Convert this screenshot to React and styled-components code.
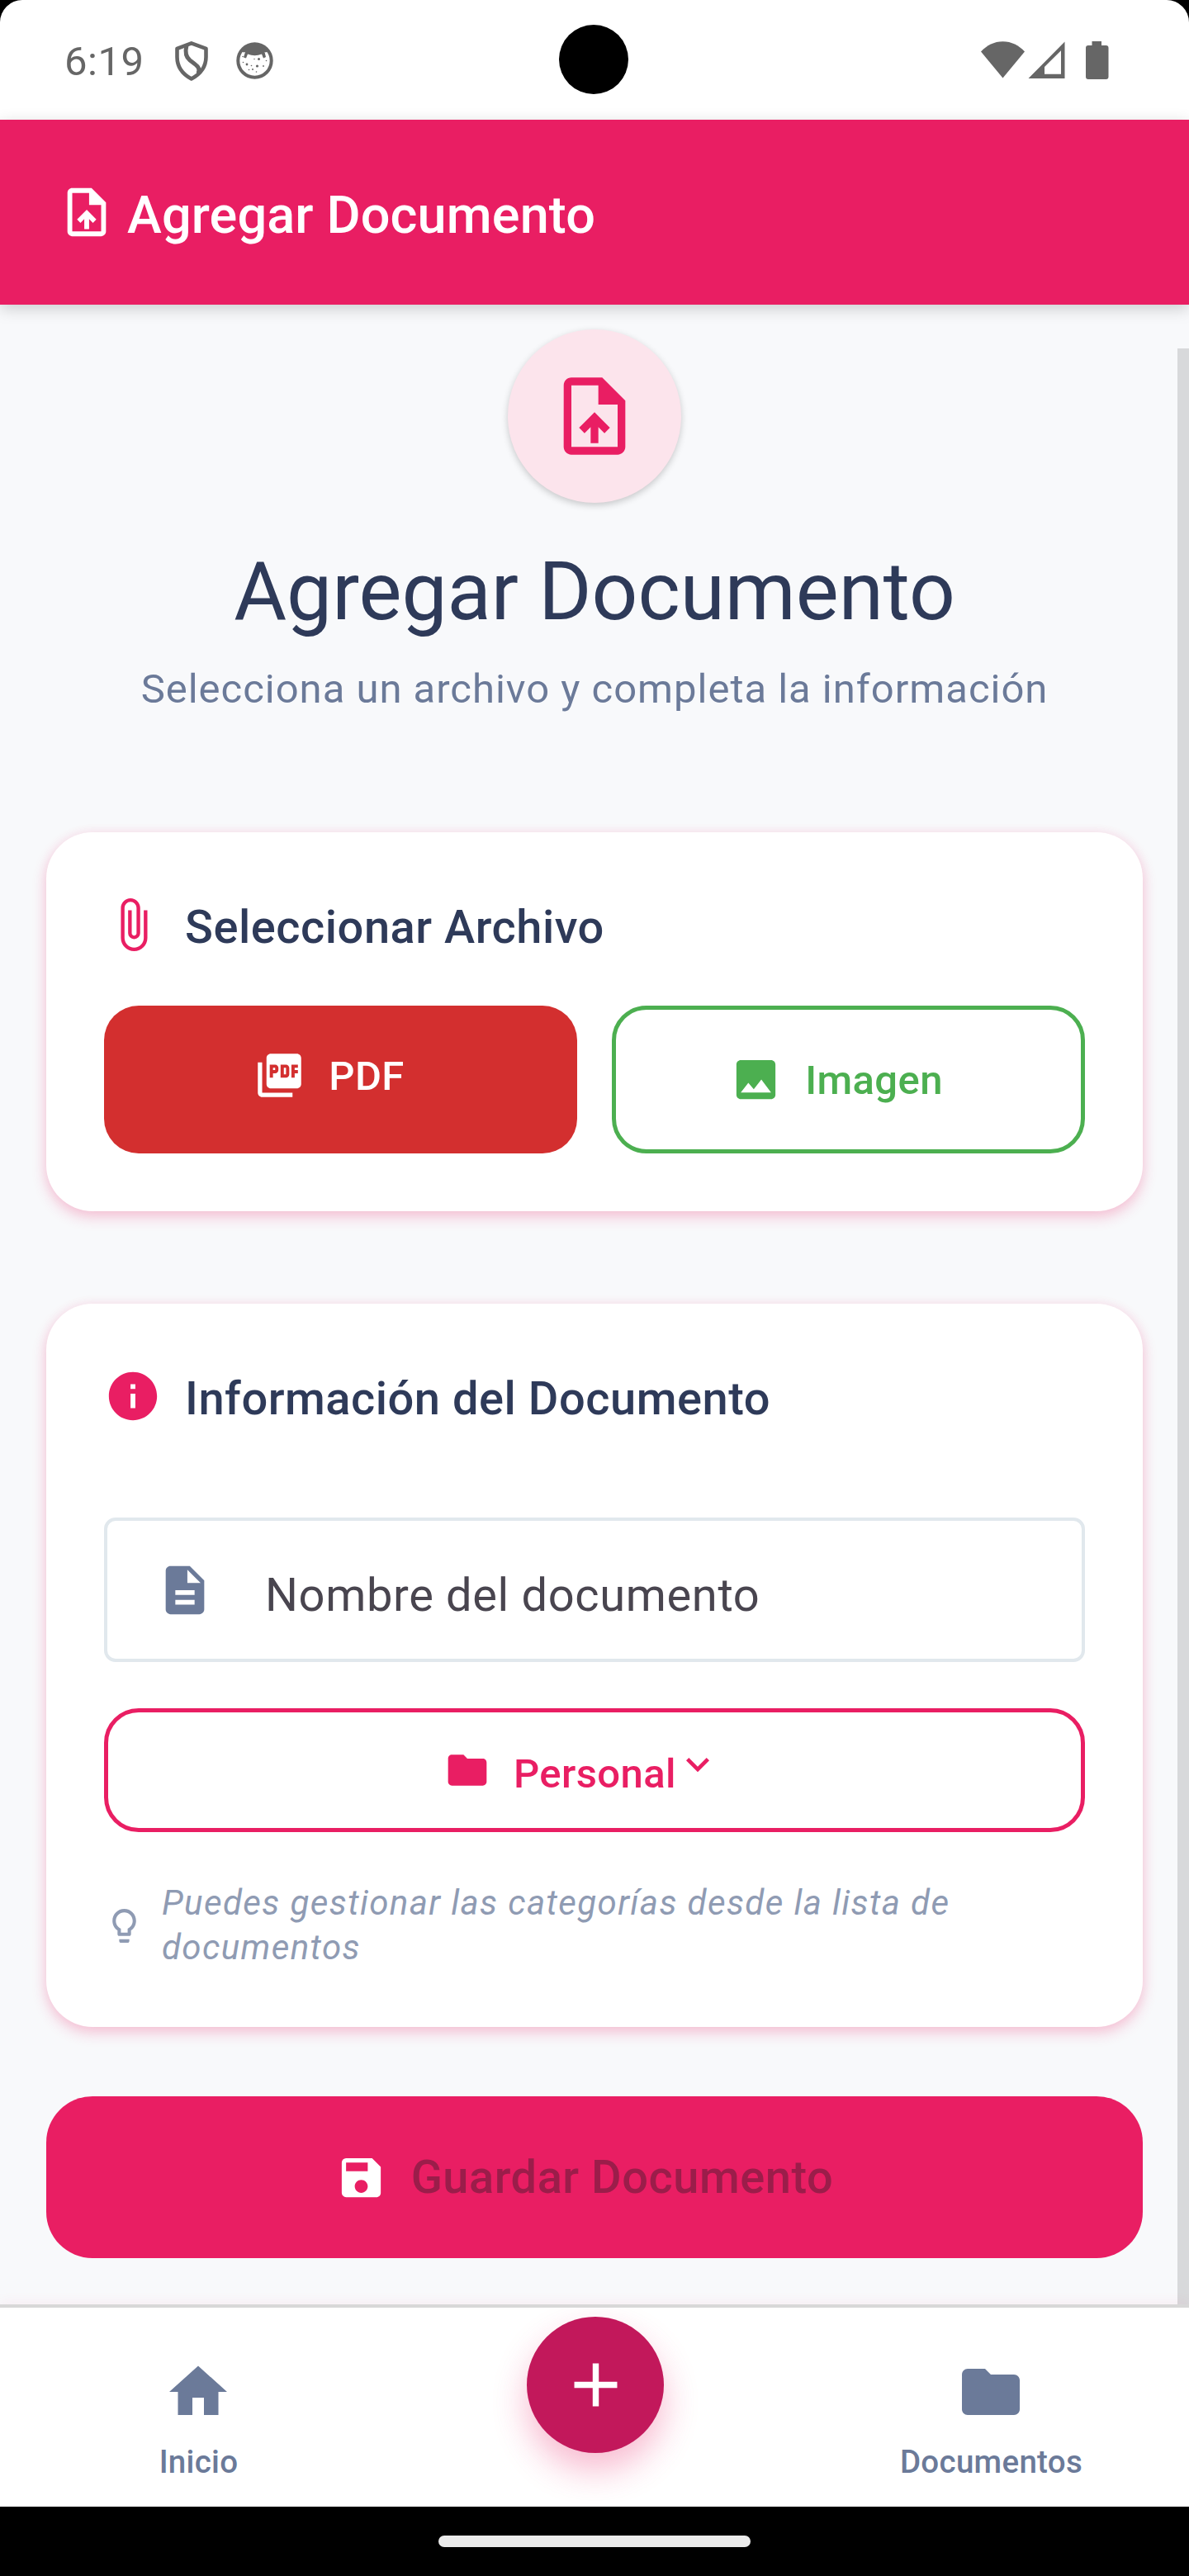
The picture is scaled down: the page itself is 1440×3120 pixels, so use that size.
import React from "react";
import styled, { createGlobalStyle, css } from "styled-components";
import {
  MdUploadFile,
  MdAttachFile,
  MdPictureAsPdf,
  MdImage,
  MdInfo,
  MdDescription,
  MdFolder,
  MdKeyboardArrowDown,
  MdLightbulbOutline,
  MdSave,
  MdHome,
  MdAdd,
} from "react-icons/md";

const pink = "#E91E63";
const navy = "#2E3A59";
const slate = "#6B7A99";

const GlobalStyle = createGlobalStyle`
  * { box-sizing: border-box; }
  html, body { margin: 0; background: #000; }
  body { font-family: Roboto, "Noto Sans", sans-serif; }
  button { font: inherit; border: 0; background: none; padding: 0; margin: 0; }
  svg { display: block; flex: none; }
`;

const Screen = styled.div`
  width: 1440px;
  height: 3120px;
  display: flex;
  flex-direction: column;
  overflow: hidden;
  background: #f8f9fb;
`;

const StatusArea = styled.div`
  height: 145px;
  flex: none;
  background: #000;
`;

const StatusBar = styled.div`
  position: relative;
  height: 100%;
  display: flex;
  justify-content: space-between;
  align-items: flex-start;
  padding: 50px 97px 0 78px;
  background: #fff;
  border-radius: 27px 27px 0 0;
  color: #666;
`;

const Camera = styled.div`
  position: absolute;
  left: 677px;
  top: 30px;
  width: 84px;
  height: 84px;
  border-radius: 50%;
  background: #000;
`;

const StatusGroup = styled.div`
  display: flex;
  align-items: flex-start;
`;

const Clock = styled.span`
  width: 133px;
  font-size: 49px;
  line-height: 50px;
  letter-spacing: 0.5px;
`;

const StatusIcons = styled.div`
  display: flex;
  gap: 33px;
`;

const Header = styled.header`
  position: relative;
  z-index: 2;
  flex: none;
  height: 224px;
  display: flex;
  align-items: center;
  gap: 14px;
  padding: 0 70px;
  background: ${pink};
  color: #fff;
  box-shadow: 0 5px 18px rgba(0, 0, 0, 0.18);
`;

const HeaderTitle = styled.div`
  font-size: 63px;
  line-height: 74px;
  font-weight: 500;
  letter-spacing: 0.12px;
  margin-top: 7px;
`;

const Content = styled.main`
  position: relative;
  flex: 1;
  display: flex;
  flex-direction: column;
  padding: 30px 56px 0;
`;

const ScrollThumb = styled.div`
  position: absolute;
  right: 0;
  top: 53px;
  bottom: 0;
  width: 14px;
  background: #d8d9db;
`;

const Intro = styled.section`
  display: flex;
  flex-direction: column;
  align-items: center;
  height: 609px;
`;

const IntroBadge = styled.div`
  width: 210px;
  height: 210px;
  border-radius: 50%;
  display: flex;
  align-items: center;
  justify-content: center;
  background: #fce4ec;
  color: ${pink};
  box-shadow: 0 3px 8px rgba(0, 0, 0, 0.2);
`;

const Title = styled.h1`
  margin: 45px 0 0;
  font-size: 98px;
  line-height: 126px;
  font-weight: 400;
  color: ${navy};
`;

const Subtitle = styled.p`
  margin: 20px 0 0;
  font-size: 49px;
  line-height: 70px;
  letter-spacing: 0.98px;
  white-space: nowrap;
  color: ${slate};
`;

const Card = styled.section`
  flex: none;
  height: ${(p) => p.$height}px;
  margin-bottom: ${(p) => p.$after}px;
  padding: 77px 70px 0;
  border-radius: 56px;
  background: #fff;
  box-shadow: 0 7px 17px rgba(233, 30, 99, 0.24), 0 0 14px rgba(233, 30, 99, 0.06);
`;

const CardHeading = styled.div`
  display: flex;
  align-items: center;
  gap: 28px;
  height: 70px;
  color: ${pink};
`;

const CardTitle = styled.h2`
  margin: 6px 0 0;
  font-size: 56px;
  line-height: 70px;
  font-weight: 500;
  letter-spacing: 0.525px;
  color: ${navy};
`;

const ButtonRow = styled.div`
  display: grid;
  grid-template-columns: 1fr 1fr;
  gap: 42px;
  margin-top: 63px;
`;

const FileButton = styled.button`
  height: 179px;
  display: flex;
  justify-content: center;
  align-items: center;
  gap: 28px;
  border-radius: 42px;
  ${(p) =>
    p.$filled
      ? css`
          background: #d32f2f;
          color: #fff;
          padding: 0 28px 10px 0;
        `
      : css`
          border: 5px solid #4caf50;
          color: #4caf50;
          padding-right: 29px;
        `}
`;

const ButtonLabel = styled.span`
  font-size: ${(p) => p.$size || 49}px;
  line-height: 70px;
  font-weight: 500;
  letter-spacing: ${(p) => p.$spacing || 0.4}px;
  margin-top: ${(p) => p.$drop || 0}px;
`;

const Field = styled.div`
  height: 175px;
  margin-top: 112px;
  display: flex;
  align-items: center;
  gap: 62px;
  padding-left: 59px;
  border: 4px solid #e1e8ed;
  border-radius: 14px;
  color: ${slate};
`;

const FieldLabel = styled.span`
  margin-top: 12px;
  font-size: 56px;
  line-height: 84px;
  letter-spacing: 0.65px;
  color: #49454f;
`;

const CategoryButton = styled.button`
  width: 100%;
  height: 150px;
  margin-top: 56px;
  display: flex;
  align-items: center;
  padding-left: 407px;
  border: 5px solid ${pink};
  border-radius: 42px;
  color: ${pink};
`;

const CategoryLabel = styled(ButtonLabel)`
  margin: 10px -2px 0 28px;
`;

const Chevron = styled(MdKeyboardArrowDown)`
  margin-bottom: 14px;
`;

const Hint = styled.div`
  display: flex;
  align-items: center;
  gap: 21px;
  margin-top: 59px;
  color: #8f9bb3;
`;

const HintText = styled.p`
  margin: 0;
  width: 1010px;
  font-size: 42px;
  line-height: 54px;
  font-style: italic;
  letter-spacing: 1.4px;
`;

const SaveButton = styled.button`
  flex: none;
  width: 100%;
  height: 196px;
  display: flex;
  justify-content: center;
  align-items: center;
  gap: 29px;
  padding-right: 25px;
  border-radius: 56px;
  background: ${pink};
  color: #fff;
`;

const SaveLabel = styled(ButtonLabel)`
  color: #9b1d4a;
`;

const NavBar = styled.nav`
  position: relative;
  z-index: 2;
  flex: none;
  height: 245px;
  display: grid;
  grid-template-columns: repeat(3, 1fr);
  border-top: 4px solid #d8d8d8;
  background: #fff;
  box-shadow: 0 -2px 16px rgba(233, 30, 99, 0.06);
`;

const NavItem = styled.div`
  display: flex;
  flex-direction: column;
  align-items: center;
  padding-top: 60px;
  color: ${slate};
`;

const NavLabel = styled.span`
  margin: 18px 0 0 1px;
  font-size: 38.5px;
  line-height: 50px;
  font-weight: 500;
  letter-spacing: 0.3px;
`;

const FabSlot = styled.div`
  display: flex;
  justify-content: center;
  padding: 11px 0 0 2px;
  overflow: hidden;
`;

const Fab = styled.button`
  width: 166px;
  height: 165px;
  border-radius: 50%;
  display: flex;
  align-items: center;
  justify-content: center;
  background: #c2185b;
  color: #fff;
  box-shadow: 0 21px 42px rgba(233, 30, 99, 0.3);
`;

const GestureBar = styled.div`
  position: relative;
  z-index: 3;
  flex: none;
  height: 84px;
  padding-top: 35px;
  background: #000;
`;

const Handle = styled.div`
  width: 378px;
  height: 14px;
  margin: 0 auto;
  border-radius: 7px;
  background: #ebebeb;
`;

const ShieldIcon = () => (
  <svg width="42" height="50" viewBox="0 0 42 50" fill="none" stroke="currentColor" strokeWidth="4.6" strokeLinejoin="round">
    <path d="M20.800 2.300L3.500 8.800V19C3.500 31 10.500 40 20.800 45.500C31 40 38.500 31 38.500 19V8.800Z" />
    <path d="M15 5C13 13 14 19 19 23C27 29 32.500 32 29 39" strokeWidth="5" />
  </svg>
);

const freckles = [
  [13, 28, 1.4],
  [27.5, 21.5, 1.5],
  [25.5, 30, 1.6],
  [20, 34, 1],
  [8.5, 25.5, 0.8],
  [18.5, 29.5, 0.8],
  [33, 30, 0.9],
  [36.5, 23.5, 0.8],
  [8, 18.5, 0.8],
  [22, 21.5, 0.7],
  [15.5, 34.5, 0.8],
  [24.5, 37, 0.8],
];

const FaceIcon = () => (
  <svg width="46" height="46" viewBox="0 0 46 46" fill="currentColor">
    <circle cx="22.500" cy="23.500" r="20.200" fill="none" stroke="currentColor" strokeWidth="4" />
    <path d="M6 11.500Q22.500-5 39 11.500L36 13.500L34.500 13L36 19L33 20.500L31 15.500Q22.500 19 14 15.500L12 20.500L9 19.500L11 13L9 13.500Z" />
    {freckles.map(([x, y, r]) => (
      <circle key={`${x}-${y}`} cx={x} cy={y} r={r} />
    ))}
  </svg>
);

const ConnectivityIcons = () => (
  <svg width="155" height="47" viewBox="0 0 155 47" fill="currentColor">
    <path d="M0 12.500C7 5 16 0.200 26.500 0.200S46 5 53 12.500L26.500 44.500Z" />
    <path fillRule="evenodd" d="M57.500 45L101.500 0.500V45ZM77 31V39.800H97V11.300Z" />
    <path d="M134.500 0H146V5H151.500Q154.500 5 154.500 8V43Q154.500 46 151.500 46H130Q127 46 127 43V8Q127 5 130 5H134.500Z" />
  </svg>
);

export default function App() {
  return (
    <>
      <GlobalStyle />
      <Screen>
        <StatusArea>
          <StatusBar>
            <StatusGroup>
              <Clock>6:19</Clock>
              <StatusIcons>
                <ShieldIcon />
                <FaceIcon />
              </StatusIcons>
            </StatusGroup>
            <Camera />
            <ConnectivityIcons />
          </StatusBar>
        </StatusArea>
        <Header>
          <MdUploadFile size={70} />
          <HeaderTitle>Agregar Documento</HeaderTitle>
        </Header>
        <Content>
          <Intro>
            <IntroBadge>
              <MdUploadFile size={112} />
            </IntroBadge>
            <Title>Agregar Documento</Title>
            <Subtitle>Selecciona un archivo y completa la información</Subtitle>
          </Intro>
          <Card $height={459} $after={112}>
            <CardHeading>
              <MdAttachFile size={70} />
              <CardTitle>Seleccionar Archivo</CardTitle>
            </CardHeading>
            <ButtonRow>
              <FileButton $filled>
                <MdPictureAsPdf size={63} />
                <ButtonLabel $drop={3}>PDF</ButtonLabel>
              </FileButton>
              <FileButton>
                <MdImage size={63} />
                <ButtonLabel $drop={3}>Imagen</ButtonLabel>
              </FileButton>
            </ButtonRow>
          </Card>
          <Card $height={876} $after={84}>
            <CardHeading>
              <MdInfo size={70} />
              <CardTitle>Información del Documento</CardTitle>
            </CardHeading>
            <Field>
              <MdDescription size={70} />
              <FieldLabel>Nombre del documento</FieldLabel>
            </Field>
            <CategoryButton>
              <MdFolder size={56} />
              <CategoryLabel>Personal</CategoryLabel>
              <Chevron size={56} />
            </CategoryButton>
            <Hint>
              <MdLightbulbOutline size={49} />
              <HintText>Puedes gestionar las categorías desde la lista de documentos</HintText>
            </Hint>
          </Card>
          <SaveButton>
            <MdSave size={63} />
            <SaveLabel $size={56} $spacing={0.525}>Guardar Documento</SaveLabel>
          </SaveButton>
          <ScrollThumb />
        </Content>
        <NavBar>
          <NavItem>
            <MdHome size={84} />
            <NavLabel>Inicio</NavLabel>
          </NavItem>
          <FabSlot>
            <Fab>
              <MdAdd size={89} />
            </Fab>
          </FabSlot>
          <NavItem>
            <MdFolder size={84} />
            <NavLabel>Documentos</NavLabel>
          </NavItem>
        </NavBar>
        <GestureBar>
          <Handle />
        </GestureBar>
      </Screen>
    </>
  );
}
